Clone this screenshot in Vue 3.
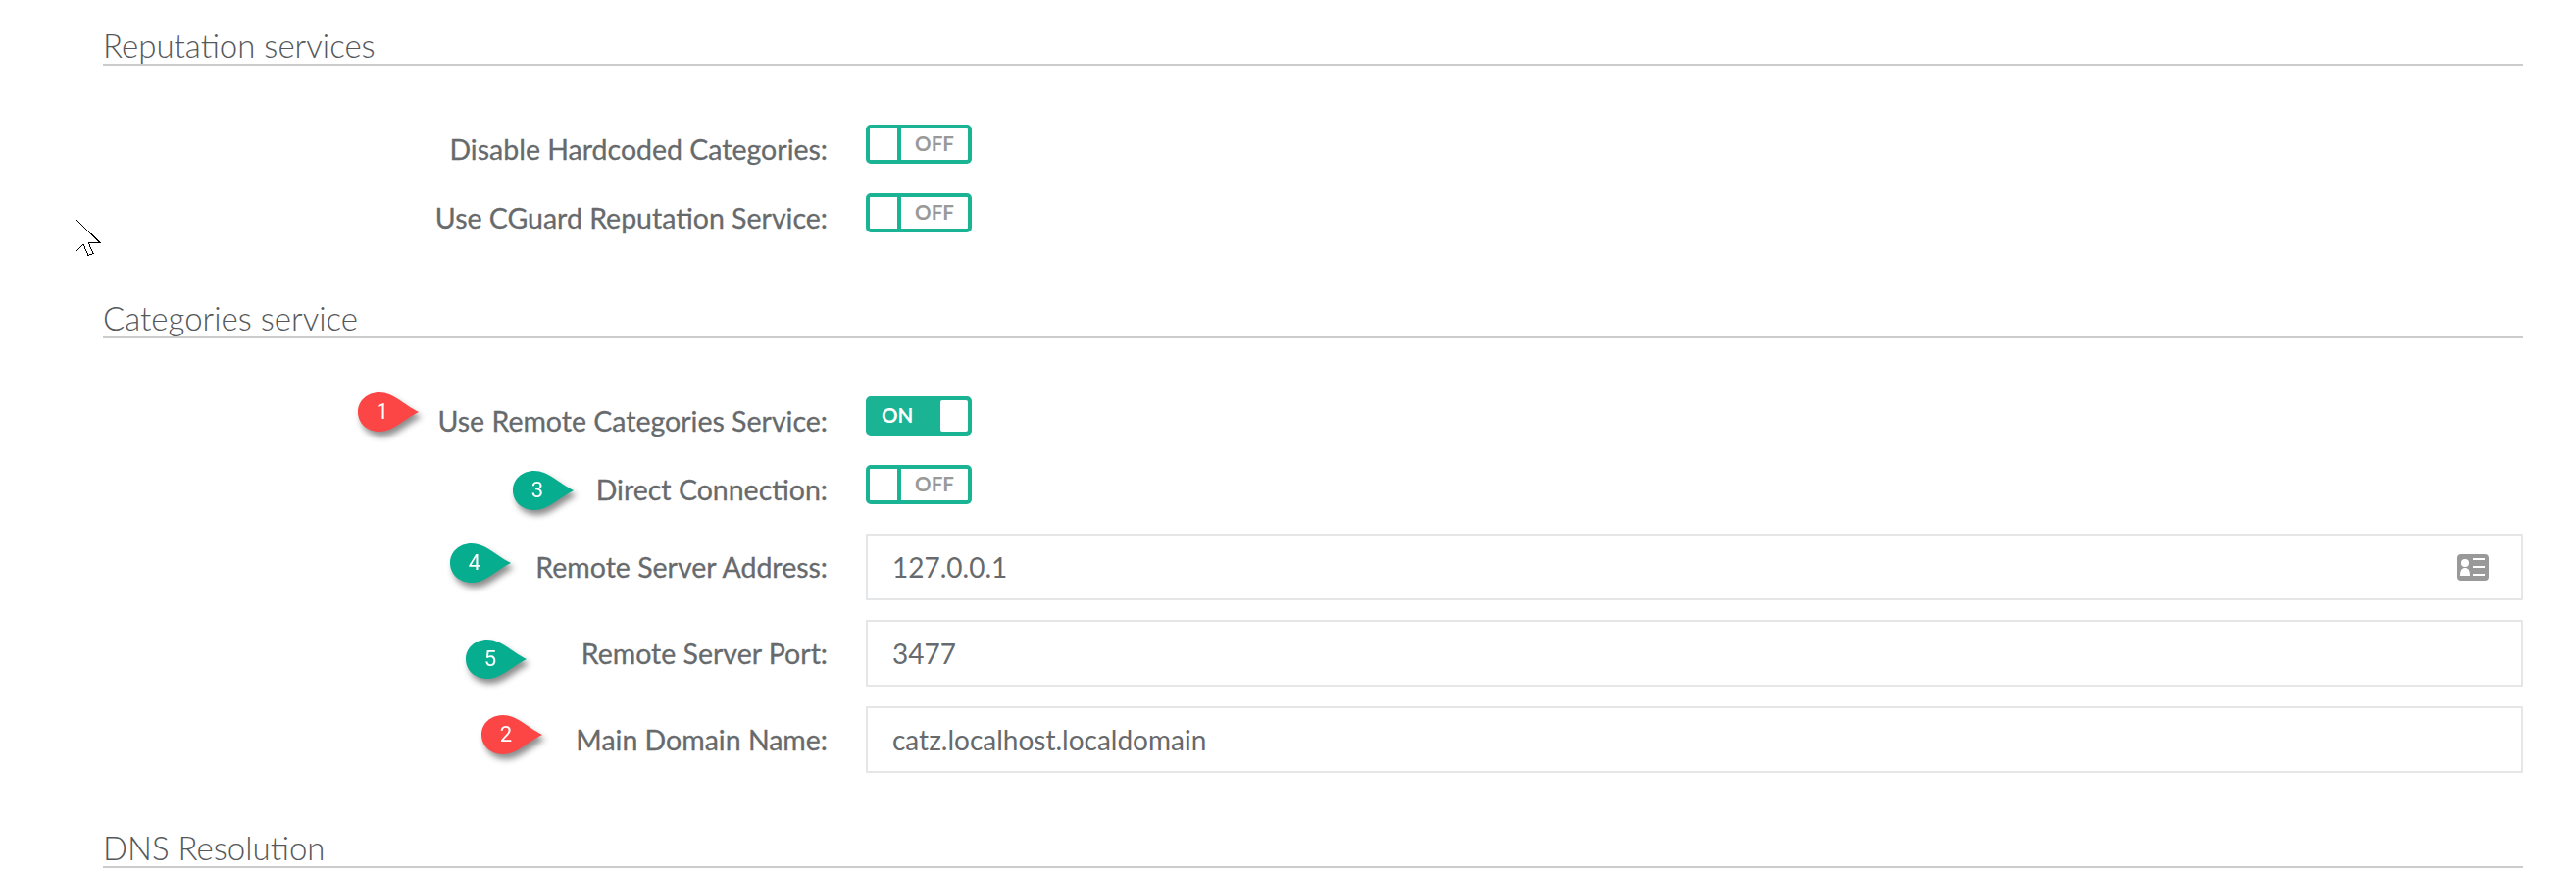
<script setup>
const reputationRows = [
  { label: 'Disable Hardcoded Categories:', on: false },
  { label: 'Use CGuard Reputation Service:', on: false },
];

const RED = '#fc4545';
const GREEN = '#07ad8f';

const categoryToggles = [
  { label: 'Use Remote Categories Service:', on: true, badge: { n: 1, color: RED, x: 365, y: -4 } },
  { label: 'Direct Connection:', on: false, badge: { n: 3, color: GREEN, x: 523, y: 6 } },
];

const categoryInputs = [
  { label: 'Remote Server Address:', value: '127.0.0.1', icon: true, badge: { n: 4, color: GREEN, x: 459, y: 10 } },
  { label: 'Remote Server Port:', value: '3477', badge: { n: 5, color: GREEN, x: 475, y: 20 } },
  { label: 'Main Domain Name:', value: 'catz.localhost.localdomain', badge: { n: 2, color: RED, x: 491, y: 9 } },
];
</script>

<template>
  <div class="page">
    <svg class="cursor" width="30" height="40" viewBox="0 0 30 40">
      <path d="M1 1V35L9 27L14 38.500L19 36.500L14 25H25.500Z" fill="#fff" stroke="#000" stroke-width="1" shape-rendering="crispEdges" />
    </svg>

    <section class="section first">
      <h3 class="heading">Reputation services</h3>
      <div class="rows toggles">
        <div v-for="row in reputationRows" :key="row.label" class="row">
          <label class="label">{{ row.label }}</label>
          <div class="switch"><span class="knob"></span><span class="off">OFF</span></div>
        </div>
      </div>
    </section>

    <section class="section second">
      <h3 class="heading">Categories service</h3>
      <div class="rows toggles">
        <div v-for="row in categoryToggles" :key="row.label" class="row">
          <svg class="badge" :style="{ left: row.badge.x - 105 + 'px', top: row.badge.y + 'px' }" width="74" height="54" viewBox="0 0 74 54">
            <path d="M22 0C36 0 46 12 62 20C46 28 36 40 22 40C9 40 0 31 0 20C0 9 9 0 22 0Z" :fill="row.badge.color" />
            <text x="25" y="27" text-anchor="middle">{{ row.badge.n }}</text>
          </svg>
          <label class="label">{{ row.label }}</label>
          <div v-if="row.on" class="switch on"><span class="on-text">ON</span><span class="knob"></span></div>
          <div v-else class="switch"><span class="knob"></span><span class="off">OFF</span></div>
        </div>
      </div>
      <div class="rows inputs">
        <div v-for="row in categoryInputs" :key="row.label" class="row">
          <svg class="badge" :style="{ left: row.badge.x - 105 + 'px', top: row.badge.y + 'px' }" width="74" height="54" viewBox="0 0 74 54">
            <path d="M22 0C36 0 46 12 62 20C46 28 36 40 22 40C9 40 0 31 0 20C0 9 9 0 22 0Z" :fill="row.badge.color" />
            <text x="25" y="27" text-anchor="middle">{{ row.badge.n }}</text>
          </svg>
          <label class="label">{{ row.label }}</label>
          <div class="input">
            <span>{{ row.value }}</span>
            <svg v-if="row.icon" width="32" height="27" viewBox="0 0 32 27">
              <rect width="32" height="27" rx="4" fill="#999" />
              <circle cx="8" cy="9" r="4" fill="#fff" />
              <path d="M3 22C3 16 5 14 8 14C11 14 13 16 13 22Z" fill="#fff" />
              <path d="M16 5H28M16 13H28M16 21H28" stroke="#fff" stroke-width="2" />
            </svg>
          </div>
        </div>
      </div>
    </section>

    <section class="section third">
      <h3 class="heading">DNS Resolution</h3>
    </section>
  </div>
</template>

<style>
html, body {
  margin: 0;
  background: #fff;
}
</style>

<style scoped>
.page {
  position: relative;
  height: 890px;
  overflow: hidden;
  padding: 0 54px 0 105px;
  font-family: Lato, "Open Sans", sans-serif;
  color: #676a6c;
}

.cursor {
  position: absolute;
  left: 76px;
  top: 222px;
}

.section.first { padding-top: 23px; }
.section.second { margin-top: 64px; }
.section.third { margin-top: 53px; }

.heading {
  margin: 0;
  height: 42px;
  font-size: 33px;
  line-height: 46px;
  font-weight: 300;
  color: #55585a;
  border-bottom: 2px solid #ccc;
}

.rows {
  display: flex;
  flex-direction: column;
}

.rows.toggles {
  margin-top: 59px;
  gap: 30px;
}

.first .rows.toggles {
  margin-top: 60px;
}

.rows.inputs {
  margin-top: 30px;
  gap: 20px;
}

.row {
  position: relative;
  display: grid;
  grid-template-columns: 739px 1fr;
  column-gap: 39px;
  align-items: center;
}

.label {
  text-align: right;
  font-size: 28.500px;
  line-height: 40px;
  height: 40px;
  padding-top: 5px;
  box-sizing: border-box;
  -webkit-text-stroke: 0.3px #676a6c;
}

.inputs .label {
  height: auto;
  padding-top: 0;
}

.switch {
  display: flex;
  width: 108px;
  height: 40px;
  box-sizing: border-box;
  border: 4px solid #1ab394;
  border-radius: 5px;
  background: #fff;
  font-size: 20.500px;
  font-weight: 700;
  line-height: 31px;
}

.knob {
  width: 28px;
  background: #fff;
  border-radius: 2px;
}

.off {
  flex: 1;
  border-left: 4px solid #1ab394;
  color: #999;
  text-align: center;
}

.switch.on {
  background: #1ab394;
}

.on-text {
  flex: 1;
  color: #fff;
  text-align: left;
  padding-left: 12px;
}

.input {
  height: 68px;
  box-sizing: border-box;
  border: 2px solid #e5e6e7;
  border-radius: 1px;
  padding: 0 33px 0 25px;
  display: flex;
  align-items: center;
  justify-content: space-between;
  font-size: 28px;
}

.badge {
  position: absolute;
  overflow: visible;
  filter: drop-shadow(3px 5px 3px rgba(0, 0, 0, 0.45));
}

.badge text {
  font-family: Roboto, sans-serif;
  font-size: 22px;
  fill: #fff;
}
</style>
